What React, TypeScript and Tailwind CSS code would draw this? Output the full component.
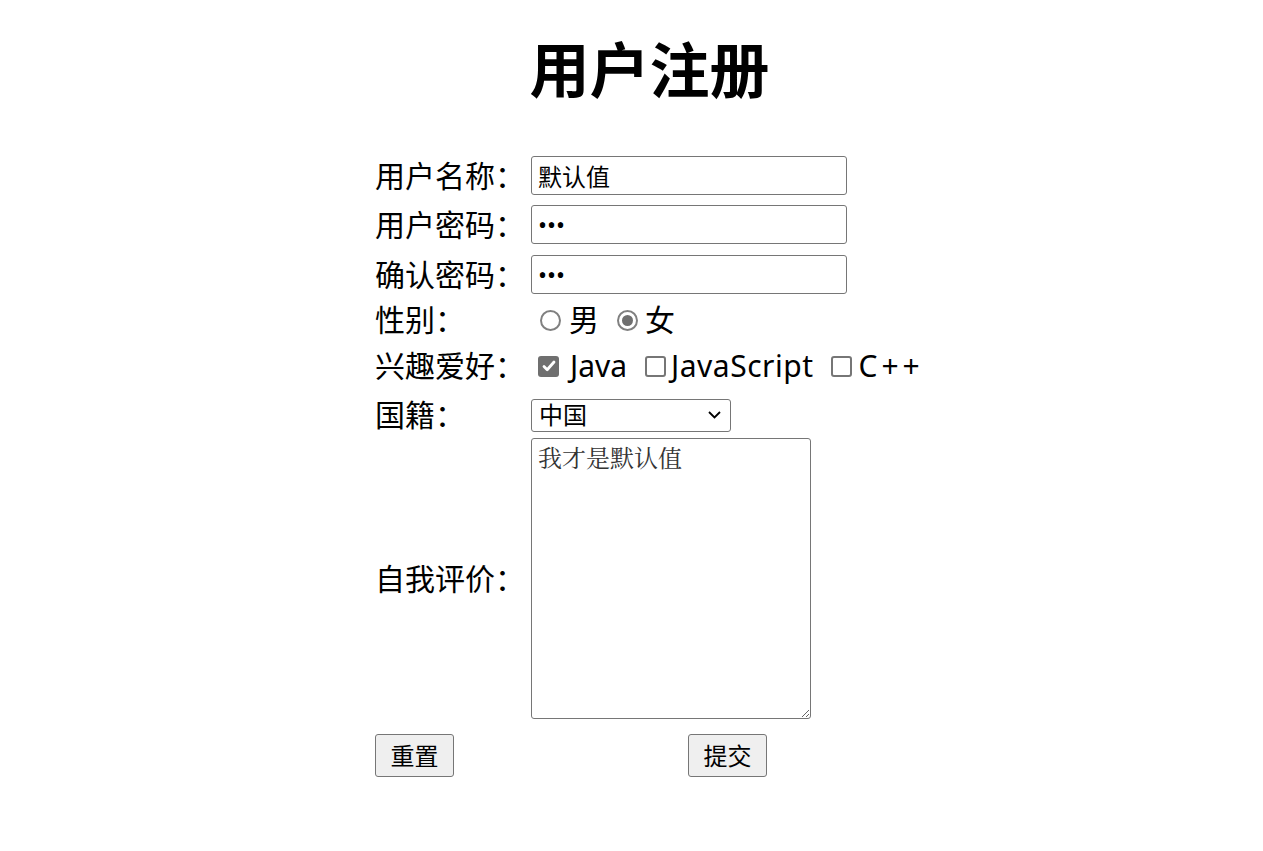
import { useState } from 'react';

const sans = "font-['Noto_Sans','Noto_Sans_CJK_SC',sans-serif]";

function Radio({ checked, className = '' }: { checked?: boolean; className?: string }) {
  return (
    <span
      className={`w-[21px] h-[21px] rounded-full border-2 border-[#808080] bg-white flex items-center justify-center shrink-0 ${className}`}
    >
      {checked && <span className="w-[11px] h-[11px] rounded-full bg-[#6f6f6f]" />}
    </span>
  );
}

function Checkbox({ checked, className = '' }: { checked?: boolean; className?: string }) {
  if (checked)
    return (
      <span
        className={`w-[21px] h-[21px] rounded-[3px] bg-[#6f6f6f] flex items-center justify-center shrink-0 ${className}`}
      >
        <svg width="16" height="16" viewBox="0 0 16 16" fill="none">
          <path d="M3 8.5l3.2 3.2L13 4" stroke="white" strokeWidth="2.8" strokeLinecap="round" strokeLinejoin="round" />
        </svg>
      </span>
    );
  return (
    <span
      className={`w-[21px] h-[21px] rounded-[3px] border-2 border-[#767676] bg-white shrink-0 ${className}`}
    />
  );
}

export default function App() {
  const [nation, setNation] = useState('中国');

  return (
    <div className={`bg-white min-h-[851px] pl-[36px] pt-[34px] text-black ${sans}`}>
      <div className="w-[549px] mx-auto">
        <h1 className="text-center text-[60px] font-bold leading-[72px] h-[72px]">用户注册</h1>

        <div className="mt-[50px] grid grid-cols-[156px_393px] text-[30px] leading-none">
          {/* 用户名称 */}
          <div className="flex items-center h-[39px]">用户名称：</div>
          <div className="flex items-center h-[39px]">
            <input
              defaultValue="默认值"
              className="w-[316px] h-[39px] border border-[#767676] rounded-[3px] px-[6px] text-[24px] outline-none"
            />
          </div>

          {/* 用户密码 */}
          <div className="flex items-center h-[39px] mt-[10px]">用户密码：</div>
          <div className="flex items-center h-[39px] mt-[10px]">
            <input
              type="password"
              defaultValue="123"
              className="w-[316px] h-[39px] border border-[#767676] rounded-[3px] px-[6px] text-[24px] outline-none"
            />
          </div>

          {/* 确认密码 */}
          <div className="flex items-center h-[39px] mt-[11px]">确认密码：</div>
          <div className="flex items-center h-[39px] mt-[11px]">
            <input
              type="password"
              defaultValue="123"
              className="w-[316px] h-[39px] border border-[#767676] rounded-[3px] px-[6px] text-[24px] outline-none"
            />
          </div>

          {/* 性别 */}
          <div className="flex items-center h-[44px] mt-[4px]">性别：</div>
          <div className="flex items-center h-[44px] mt-[4px] pl-[9px]">
            <Radio />
            <span className="ml-[8px]">男</span>
            <Radio checked className="ml-[18px]" />
            <span className="ml-[7px]">女</span>
          </div>

          {/* 兴趣爱好 */}
          <div className="flex items-center h-[44px] mt-[2px]">兴趣爱好：</div>
          <div className="flex items-center h-[44px] mt-[2px] pl-[7px]">
            <Checkbox checked />
            <span className="ml-[11px]">Java</span>
            <Checkbox className="ml-[18px]" />
            <span className="ml-[5px] tracking-[0.5px]">JavaScript</span>
            <Checkbox className="ml-[18px]" />
            <span className="ml-[6px] tracking-[4px]">C++</span>
          </div>

          {/* 国籍 */}
          <div className="flex items-center h-[33px] mt-[10px]">国籍：</div>
          <div className="flex items-center h-[33px] mt-[10px]">
            <div className="relative w-[200px] h-[33px]">
              <select
                value={nation}
                onChange={(e) => setNation(e.target.value)}
                className="appearance-none w-full h-full border border-[#767676] rounded-[3px] pl-[7px] text-[24px] bg-white outline-none"
              >
                <option>中国</option>
                <option>美国</option>
                <option>日本</option>
              </select>
              <svg className="absolute right-[10px] top-[13px] pointer-events-none" width="13" height="8" viewBox="0 0 13 8" fill="none">
                <path d="M1 1l5.5 5.5L12 1" stroke="black" strokeWidth="1.8" />
              </svg>
            </div>
          </div>

          {/* 自我评价 */}
          <div className="flex items-center h-[281px] mt-[7px]">自我评价：</div>
          <div className="flex items-center h-[281px] mt-[7px]">
            <textarea
              defaultValue="我才是默认值"
              className="w-[280px] h-[281px] border border-[#767676] rounded-[3px] px-[6px] py-[3px] text-[24px] leading-[30px] text-[#333] outline-none font-['Noto_Serif_CJK_SC','Noto_Sans_CJK_SC',serif]"
            />
          </div>

          {/* 按钮 */}
          <div className="flex items-center h-[43px] mt-[15px]">
            <button
              type="reset"
              className="w-[79px] h-[43px] bg-[#efefef] border border-[#767676] rounded-[3px] text-[24px]"
            >
              重置
            </button>
          </div>
          <div className="flex items-center justify-center h-[43px] mt-[15px]">
            <button
              type="submit"
              className="w-[79px] h-[43px] bg-[#efefef] border border-[#767676] rounded-[3px] text-[24px]"
            >
              提交
            </button>
          </div>
        </div>
      </div>
    </div>
  );
}
